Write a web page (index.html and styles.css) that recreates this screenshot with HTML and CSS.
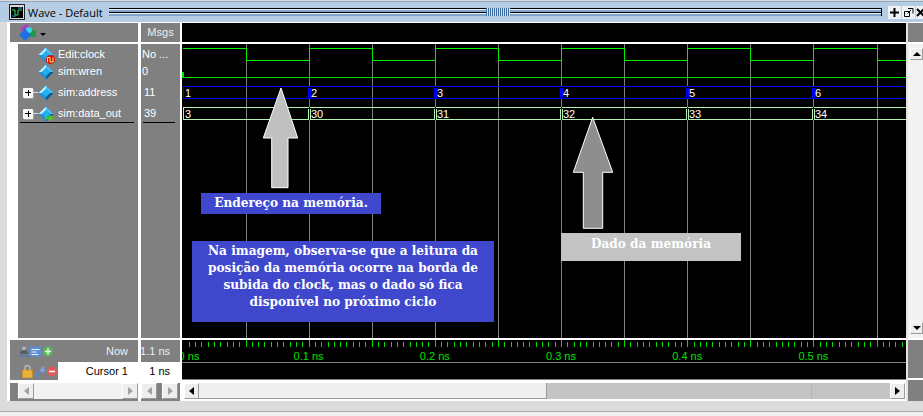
FILE: index.html
```html
<!DOCTYPE html>
<html>
<head>
    <title>Wave - Default</title>
    <link rel="stylesheet" href="styles.css">
</head>
<body>
    <svg class="defs" width="0" height="0">
        <defs>
            <symbol id="diamond" viewBox="0 0 16 16">
                <path d="M8 0.500 15.500 8 8 15.500 0.500 8z" fill="#1a8fd0"/>
                <path d="M8 0.500 8 4 4 8 0.500 8z" fill="#bdeeff"/>
                <path d="M8 0.500 15.500 8 12 8 8 4z" fill="#4fbdf0"/>
                <path d="M0.500 8 4 8 8 12 8 15.500z" fill="#2b8fd0"/>
                <path d="M15.500 8 12 8 8 12 8 15.500z" fill="#075a90"/>
                <path d="M8 4 12 8 8 12 4 8z" fill="#1fb0f0"/>
            </symbol>
        </defs>
    </svg>
    <div class="window">
        <div class="titlebar">
            <svg class="app-icon" width="16" height="16" viewBox="0 0 16 16">
                <rect x="0.500" y="0.500" width="15" height="15" fill="#d8d8d8" stroke="#222"/>
                <rect x="2" y="3" width="12" height="11" fill="#000"/>
                <path d="M3 6h3v5h3V6h4" fill="none" stroke="#2ee06a"/>
                <path d="M3 12h4M9 4h4" stroke="#2aa0d0"/>
            </svg>
            <span class="title-text">Wave - Default</span>
            <div class="grip"><span class="grip-handle"></span></div>
            <div class="title-buttons">
                <span class="title-btn"><svg width="11" height="11" viewBox="0 0 11 11"><path d="M5.500 1v9M1 5.500h9" stroke="#000" stroke-width="2"/></svg></span>
                <span class="title-btn"><svg width="11" height="11" viewBox="0 0 11 11"><path d="M1.500 4.500h5v5h-5zM5 1.500h5v5M8 3 4.500 6.500" fill="none" stroke="#000"/></svg></span>
                <span class="title-btn title-btn-close"><svg width="8" height="11" viewBox="0 0 8 11"><path d="M1 2l7 7M8 2 1 9" stroke="#000" stroke-width="2"/></svg></span>
            </div>
        </div>
        <div class="panes">
            <div class="names">
                <div class="head head-names">
                    <svg width="17" height="17" viewBox="0 0 17 17">
                        <path d="M7 0l6 5-6 5-6-5z" fill="#a83bc8"/>
                        <rect x="8" y="6" width="9" height="7" fill="#1d9a4c"/>
                        <circle cx="10" cy="6" r="3" fill="#38d8e8"/>
                        <path d="M6 5l6 6-6 6-6-6z" fill="#1f6fe0"/>
                    </svg>
                    <span class="caret"></span>
                </div>
                <div class="list">
                    <div class="list-gutter"></div>
                    <div class="signals">
                        <div class="signal signal-clock">
                            <span class="diamond-wrap">
                                <svg class="gem" width="16" height="16"><use href="#diamond"/></svg>
                                <svg class="pulse-badge" width="9" height="9" viewBox="0 0 9 9">
                                    <circle cx="4.500" cy="4.500" r="4.500" fill="#e01010"/>
                                    <path d="M1.500 7V2.500H4V7H7V2.500" fill="none" stroke="#ffe84a"/>
                                </svg>
                            </span>
                            <span class="signal-text">Edit:clock</span>
                        </div>
                        <div class="signal signal-wren">
                            <span class="diamond-wrap"><svg class="gem" width="16" height="16"><use href="#diamond"/></svg></span>
                            <span class="signal-text">sim:wren</span>
                        </div>
                        <div class="signal signal-address">
                            <span class="plus"></span><span class="dash"></span>
                            <span class="diamond-wrap"><svg class="gem" width="16" height="16"><use href="#diamond"/></svg></span>
                            <span class="signal-text">sim:address</span>
                        </div>
                        <div class="signal signal-data">
                            <span class="plus"></span><span class="dash"></span>
                            <span class="diamond-wrap">
                                <svg class="gem" width="16" height="16"><use href="#diamond"/></svg>
                                <svg class="green-arrow" width="9" height="8" viewBox="0 0 9 8"><path d="M0 2.500h4V0l5 4-5 4V5.500H0z" fill="#46c82a"/></svg>
                            </span>
                            <span class="signal-text">sim:data_out</span>
                        </div>
                        <div class="data-rule"></div>
                    </div>
                </div>
                <div class="foot foot-names">
                    <div class="foot-row foot-row-now">
                        <span class="tool-icons">
                            <svg width="34" height="11" viewBox="0 0 34 11">
                                <circle cx="5" cy="2.500" r="2" fill="#a8b2bc"/>
                                <path d="M1 8V6l2-2h4l2 2v2z" fill="#56606c"/>
                                <path d="M0 10h10" stroke="#3f78c8"/>
                                <rect x="11" y="0.500" width="11" height="10" fill="#5c8fd8"/>
                                <path d="M12.500 3.500h8M12.500 6h5M12.500 8.500h7" stroke="#e8f0fa"/>
                                <circle cx="29" cy="5.500" r="5" fill="#59b957"/>
                                <path d="M29 2.500v6M26 5.500h6" stroke="#eef8ee" stroke-width="1.500"/>
                            </svg>
                        </span>
                        <span class="foot-label">Now</span>
                    </div>
                    <div class="foot-row foot-row-cursor">
                        <span class="tool-icons tool-icons-cursor">
                            <svg width="35" height="13" viewBox="0 0 35 13">
                                <rect x="0.500" y="5" width="10" height="8" fill="#e8b33a" stroke="#c8902a"/>
                                <path d="M3 5V3a2.500 2.500 0 0 1 5 0v2" fill="none" stroke="#b8b8b8" stroke-width="1.500"/>
                                <path d="M13 12l6-6" stroke="#5b86c8" stroke-width="2.500"/>
                                <path d="M18 7 19 3 23 1 21.500 4 24 5 21 7z" fill="#7fa8e0"/>
                                <circle cx="30" cy="6.500" r="5" fill="#e25b5b"/>
                                <path d="M27 6.500h6" stroke="#fff" stroke-width="1.500"/>
                            </svg>
                        </span>
                        <span class="cursor-name">Cursor 1</span>
                    </div>
                </div>
                <div class="hscroll hscroll-names">
                    <span class="sb-btn"><span class="arrow-left muted"></span></span>
                    <span class="sb-track dotted"></span>
                    <span class="sb-btn"><span class="arrow-right muted"></span></span>
                </div>
            </div>
            <div class="msgs">
                <div class="head head-msgs">Msgs</div>
                <div class="values">
                    <div class="value value-clock">No ...</div>
                    <div class="value value-wren">0</div>
                    <div class="value value-address">11</div>
                    <div class="value value-data">39</div>
                    <div class="value-rule"></div>
                </div>
                <div class="foot foot-msgs">
                    <div class="foot-row foot-row-now foot-now">1.1 ns</div>
                    <div class="foot-row foot-row-cursor foot-cursor">1 ns</div>
                </div>
                <div class="hscroll hscroll-msgs">
                    <span class="sb-btn"><span class="arrow-left muted"></span></span>
                    <span class="sb-track"></span>
                    <span class="sb-btn"><span class="arrow-right muted"></span></span>
                </div>
            </div>
            <div class="wave">
                <div class="wave-top"></div>
                <div class="wave-canvas">
                    <svg id="traces" width="724" height="294"></svg>
                    <svg class="big-arrow arrow-address" width="38" height="103" viewBox="0 0 38 103">
                        <path d="M19 1 35.700 51H26V100.700H9.700V51H1.300z" fill="#c0c0c0" stroke="#fff"/>
                    </svg>
                    <svg class="big-arrow arrow-data" width="42" height="114" viewBox="0 0 42 114">
                        <path d="M20.700 1.300 40.700 56.300H30.700V112.300H11.300V56.300H1.300z" fill="#8e8e8e" stroke="#fff"/>
                    </svg>
                    <div class="note note-address">Endereço na memória.</div>
                    <div class="note note-text">Na imagem, observa-se que a leitura da<br>posição da memória ocorre na borda de<br>subida do clock, mas o dado só fica<br>disponível no próximo ciclo</div>
                    <div class="note note-data">Dado da memória</div>
                </div>
                <div class="ruler">
                    <svg id="ruler" width="724" height="22"></svg>
                    <div class="ruler-blank"></div>
                </div>
                <div class="hscroll hscroll-wave">
                    <span class="sb-btn"><span class="arrow-left"></span></span>
                    <span class="sb-thumb"></span>
                    <span class="sb-track solid"><span class="sb-mark"></span></span>
                    <span class="sb-btn"><span class="arrow-right"></span></span>
                </div>
            </div>
            <div class="vscroll">
                <div class="vs-top"></div>
                <div class="vs-bar">
                    <span class="sb-btn"><span class="arrow-up"></span></span>
                    <span class="vs-track"></span>
                    <span class="sb-btn"><span class="arrow-down"></span></span>
                </div>
                <div class="vs-bottom"></div>
                <div class="vs-corner"></div>
            </div>
        </div>
    </div>
    <div class="status"></div>

    <script>
        const NS = 'http://www.w3.org/2000/svg';
        const traces = document.getElementById('traces');
        const ruler = document.getElementById('ruler');
        const STEP = 63.1;
        const ORIGIN = 0.4;

        function add(svg, tag, attrs, text) {
            const el = document.createElementNS(NS, tag);
            for (const key in attrs) el.setAttribute(key, attrs[key]);
            if (text) el.textContent = text;
            svg.appendChild(el);
        }

        function gridX(i) {
            return Math.round(ORIGIN + STEP * i) + 0.5;
        }

        // grade vertical
        for (let i = 1; i <= 11; i++) {
            add(traces, 'line', { x1: gridX(i), x2: gridX(i), y1: 0, y2: 294, stroke: '#808080' });
        }

        // clock
        let d = 'M1 4.5';
        let high = true;
        for (let i = 1; i <= 11; i++) {
            d += 'H' + gridX(i) + 'V' + (high ? 16.5 : 4.5);
            high = !high;
        }
        d += 'H724';
        add(traces, 'path', { d: d, fill: 'none', stroke: '#00f000' });

        // wren
        add(traces, 'path', { d: 'M1 33.5H724', fill: 'none', stroke: '#00e000' });
        add(traces, 'rect', { x: 0, y: 28, width: 2, height: 6, fill: '#00e000' });

        // barramentos
        function bus(top, color, labels) {
            const bottom = top + 12;
            add(traces, 'path', { d: 'M1 ' + top + 'H724M1 ' + bottom + 'H724M1.5 ' + top + 'V' + bottom, fill: 'none', stroke: color });
            labels.forEach((label, i) => {
                const x = i === 0 ? 1.5 : gridX(i * 2);
                if (i > 0) {
                    add(traces, 'rect', { x: x - 0.5, y: top - 0.5, width: 1, height: 13, fill: '#000' });
                    add(traces, 'path', { d: 'M' + (x - 1) + ' ' + (top + 1) + 'V' + (bottom - 1) + 'M' + (x + 1) + ' ' + (top + 1) + 'V' + (bottom - 1), fill: 'none', stroke: color });
                }
                add(traces, 'text', { x: x + 1.5, y: top + 10, fill: '#fff', class: 'bus-label' }, label);
            });
        }
        bus(42.5, '#0000ff', ['1', '2', '3', '4', '5', '6']);
        bus(63.5, '#b4f0b4', ['3', '30', '31', '32', '33', '34']);

        // regua de tempo
        for (let i = 1; i <= 114; i++) {
            const x = Math.round(ORIGIN + STEP * i / 10) + 0.5;
            const major = i % 10 === 0;
            add(ruler, 'line', { x1: x, x2: x, y1: major ? 0 : 2, y2: 7, stroke: '#00e000' });
        }
        ['0 ns', '0.1 ns', '0.2 ns', '0.3 ns', '0.4 ns', '0.5 ns'].forEach((label, i) => {
            const x = i === 0 ? 7 : ORIGIN + STEP * i * 2;
            add(ruler, 'text', { x: x, y: 20, fill: '#00e000', class: 'ruler-label', 'text-anchor': 'middle' }, label);
        });
    </script>
</body>
</html>
```

FILE: styles.css
```css
* {
    box-sizing: border-box;
}

body {
    margin: 0;
    width: 923px;
    height: 416px;
    overflow: hidden;
    background-color: #f0f0f0;
    font-family: "Liberation Sans", Arial, sans-serif;
    font-size: 11px;
}

.defs {
    display: block;
    height: 0;
}

.window {
    height: 412px;
    padding: 1px 0 0 7px;
    background-color: #dcdcdc;
    border-bottom: 1px solid #a8a8a8;
}

.titlebar {
    display: flex;
    align-items: center;
    height: 21px;
    margin-left: -7px;
    padding-left: 9px;
    background-color: #b4cde4;
    border-top: 1px solid #8ea6bf;
}

.app-icon {
    flex: none;
}

.title-text {
    margin-left: 3px;
    color: #000;
    font-family: "Open Sans", sans-serif;
    font-size: 11px;
    white-space: nowrap;
}

.grip {
    flex: 1;
    position: relative;
    height: 8px;
    margin-left: 6px;
    background: repeating-linear-gradient(to bottom, #000 0, #000 1px, #e8f2fb 1px, #e8f2fb 2px, #7fa5cc 2px, #7fa5cc 4px);
    border-right: 1px solid #000;
}

.grip-handle {
    position: absolute;
    left: 377px;
    top: 0;
    width: 24px;
    height: 8px;
    background: repeating-linear-gradient(to right, #3d6da0 0, #3d6da0 1px, #cfe0f0 1px, #cfe0f0 2px);
}

.title-buttons {
    display: flex;
    align-items: center;
    gap: 1px;
    flex: none;
    width: 41px;
    padding-left: 6px;
}

.title-btn {
    display: flex;
    align-items: center;
    justify-content: center;
    width: 13px;
    height: 13px;
    flex: none;
    background-color: #eef2f6;
}

.title-btn-close {
    width: 8px;
}

.panes {
    display: flex;
    height: 379px;
    background-color: #fff;
    padding: 1px 0 0 3px;
}

.names {
    flex: none;
    width: 131px;
    display: flex;
    flex-direction: column;
    background-color: #808080;
    border-right: 3px solid #fff;
}

.msgs {
    flex: none;
    width: 41px;
    display: flex;
    flex-direction: column;
    background-color: #808080;
    border-right: 2px solid #fff;
}

.head {
    height: 21px;
    flex: none;
    border-bottom: 2px solid #fff;
    color: #fff;
}

.head-names {
    display: flex;
    align-items: center;
    padding-left: 9px;
    gap: 4px;
}

.caret {
    width: 0;
    height: 0;
    border-left: 3px solid transparent;
    border-right: 3px solid transparent;
    border-top: 3px solid #000;
    margin-top: 3px;
}

.head-msgs {
    padding-top: 3px;
    text-align: center;
    color: #eee;
}

.list {
    height: 294px;
    flex: none;
    display: flex;
}

.list-gutter {
    width: 8px;
    background-color: #fff;
}

.signals {
    flex: 1;
    position: relative;
    color: #fff;
}

.signal {
    position: absolute;
    display: flex;
    align-items: center;
    height: 17px;
    left: 5px;
    white-space: nowrap;
}

.signal-clock { top: 2px; left: 20px; }
.signal-wren { top: 19px; left: 20px; }
.signal-address { top: 40px; }
.signal-data { top: 61px; }

.signal-text {
    margin-bottom: 2px;
}

.diamond-wrap {
    position: relative;
    display: block;
    width: 16px;
    height: 16px;
    margin-right: 4px;
}

.gem {
    display: block;
}

.pulse-badge {
    position: absolute;
    left: 8px;
    top: 8px;
}

.green-arrow {
    position: absolute;
    left: 7px;
    top: 8px;
}

.plus {
    display: block;
    flex: none;
    width: 10px;
    height: 10px;
    border-radius: 1px;
    background-color: #f8f8f8;
    box-shadow: 1px 1px 0 #a0a0a0;
    background-image: linear-gradient(#000, #000), linear-gradient(#000, #000);
    background-size: 6px 1px, 1px 6px;
    background-position: center, center;
    background-repeat: no-repeat;
}

.dash {
    width: 5px;
    height: 1px;
    background-color: #ddd;
    flex: none;
}

.data-rule {
    position: absolute;
    left: 2px;
    right: 4px;
    top: 78px;
    height: 1px;
    background-color: #000;
}

.values {
    height: 294px;
    flex: none;
    position: relative;
    color: #fff;
}

.value {
    position: absolute;
    left: 1px;
    white-space: nowrap;
}

.value-clock { top: 4px; }
.value-wren { top: 21px; }
.value-address { top: 42px; left: 3px; }
.value-data { top: 63px; left: 3px; }

.value-rule {
    position: absolute;
    left: 2px;
    right: 5px;
    top: 78px;
    height: 1px;
    background-color: #000;
}

.foot {
    flex: none;
    height: 42px;
    border-top: 2px solid #fff;
}

.foot-row {
    display: flex;
    align-items: center;
    color: #eee;
}

.foot-row-now {
    height: 22px;
}

.foot-row-cursor {
    height: 18px;
}

.tool-icons {
    display: flex;
    flex: none;
    width: 48px;
    padding-left: 9px;
}

.tool-icons-cursor {
    padding-left: 12px;
}

.foot-label {
    flex: 1;
    text-align: right;
    padding-right: 10px;
}

.cursor-name {
    flex: 1;
    height: 18px;
    line-height: 18px;
    background-color: #fff;
    color: #000;
    text-align: right;
    padding-right: 10px;
}

.foot-now {
    justify-content: flex-end;
    padding-right: 10px;
    white-space: nowrap;
}

.foot-cursor {
    justify-content: flex-end;
    padding-right: 10px;
    background-color: #fff;
    color: #000;
}

.hscroll {
    flex: none;
    height: 21px;
    display: flex;
    align-items: flex-start;
    border-top: 3px solid #fff;
}

.hscroll-names {
    background-color: #808080;
    padding-left: 8px;
}

.hscroll-msgs {
    padding-right: 2px;
}

.hscroll-wave {
    background-color: #fff;
    padding: 0 1px 0 2px;
}

.sb-btn {
    flex: none;
    display: flex;
    align-items: center;
    justify-content: center;
    width: 16px;
    height: 16px;
    background-color: #eeeeee;
    border-right: 1px solid #9a9a9a;
    border-bottom: 1px solid #9a9a9a;
    border-top: 1px solid #fff;
    border-left: 1px solid #fff;
}

.hscroll-wave .sb-btn {
    width: 15px;
}

.sb-track {
    flex: 1;
    height: 16px;
}

.dotted {
    background-color: #f2f2f2;
}

.solid {
    position: relative;
    background-color: #c4c4c4;
}

.sb-thumb {
    flex: none;
    width: 348px;
    height: 16px;
    background-color: #efefef;
    border-right: 1px solid #9a9a9a;
    border-bottom: 1px solid #9a9a9a;
}

.sb-mark {
    position: absolute;
    left: 264px;
    top: 0;
    width: 1px;
    height: 16px;
    background-color: #e8c000;
}

.arrow-left, .arrow-right, .arrow-up, .arrow-down {
    width: 0;
    height: 0;
    border: 4px solid transparent;
}

.arrow-left {
    border-right: 5px solid #000;
    border-left: 0;
}

.arrow-right {
    border-left: 5px solid #000;
    border-right: 0;
}

.arrow-up {
    border-bottom: 4px solid #000;
    border-top: 0;
}

.arrow-down {
    border-top: 4px solid #000;
    border-bottom: 0;
}

.arrow-left.muted {
    border-right-color: #a0a0a0;
}

.arrow-right.muted {
    border-left-color: #a0a0a0;
}

.wave {
    flex: none;
    width: 724px;
    display: flex;
    flex-direction: column;
}

.wave-top {
    height: 21px;
    flex: none;
    background-color: #000;
    border-bottom: 2px solid #fff;
}

.wave-canvas {
    position: relative;
    height: 294px;
    flex: none;
    background-color: #000;
    overflow: hidden;
}

#traces {
    display: block;
    shape-rendering: crispEdges;
}

.bus-label, .ruler-label {
    font-family: "Liberation Sans", Arial, sans-serif;
    font-size: 11px;
}

.big-arrow {
    position: absolute;
}

.arrow-address {
    left: 80px;
    top: 43px;
}

.arrow-data {
    left: 390px;
    top: 72px;
}

.note {
    position: absolute;
    color: #fff;
    font-family: "DejaVu Serif Condensed", "DejaVu Serif", "Liberation Serif", serif;
    font-weight: bold;
    font-size: 13.5px;
    text-align: center;
    white-space: nowrap;
}

.note-address {
    left: 19px;
    top: 149px;
    width: 180px;
    height: 21px;
    line-height: 19px;
    background-color: #3f48cc;
}

.note-text {
    left: 10px;
    top: 197px;
    width: 302px;
    height: 81px;
    padding-top: 1px;
    line-height: 17px;
    background-color: #3f48cc;
}

.note-data {
    left: 379px;
    top: 189px;
    width: 180px;
    height: 28px;
    line-height: 20px;
    background-color: #c3c3c3;
}

.ruler {
    flex: none;
    height: 42px;
    background-color: #000;
    border-top: 2px solid #fff;
}

#ruler {
    display: block;
}

.ruler-blank {
    height: 18px;
    border-top: 1px solid #808080;
    border-bottom: 1px solid #808080;
}

.vscroll {
    flex: none;
    width: 17px;
    display: flex;
    flex-direction: column;
    background-color: #808080;
    border-left: 2px solid #e4e4e4;
}

.vs-top {
    height: 21px;
    flex: none;
    border-bottom: 2px solid #fff;
}

.vs-bar {
    height: 294px;
    flex: none;
    display: flex;
    flex-direction: column;
    background-color: #f2f2f2;
    padding: 4px 0 4px 2px;
}

.vs-bar .sb-btn {
    width: 13px;
    height: 12px;
}

.vs-track {
    flex: 1;
}

.vs-bottom {
    height: 42px;
    flex: none;
    border-top: 2px solid #fff;
    border-bottom: 2px solid #fff;
}

.vs-corner {
    flex: 1;
}

.status {
    height: 4px;
    background-color: #f0f0f0;
}
```
